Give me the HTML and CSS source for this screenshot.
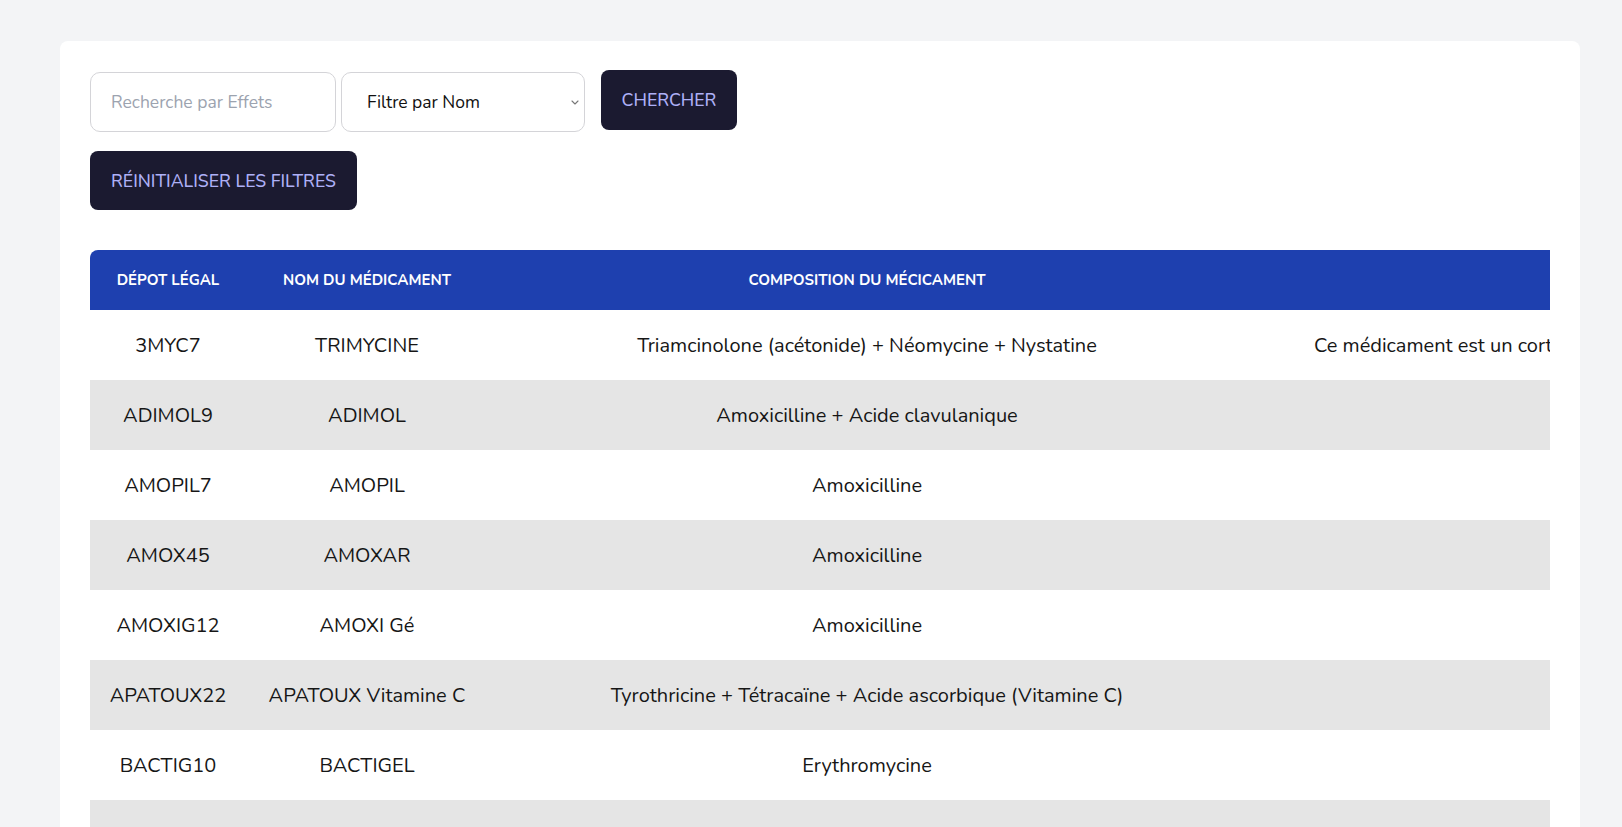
FILE: index.html
```html
<!DOCTYPE html>
<html lang="fr">
<head>
<meta charset="utf-8">
<title>Médicaments</title>
<link rel="stylesheet" href="styles.css">
</head>
<body>
<main class="page">
  <section class="card">
    <div class="filters">
      <input class="field" type="text" placeholder="Recherche par Effets">
      <span class="select-wrap">
        <select class="field select">
          <option>Filtre par Nom</option>
          <option>Filtre par Dépot légal</option>
        </select>
        <svg class="chevron" width="8" height="5" viewBox="0 0 8 5" aria-hidden="true"><path d="M1 1l3 3 3-3" fill="none" stroke="#777" stroke-width="1.1" stroke-linecap="round" stroke-linejoin="round"/></svg>
      </span>
      <button class="btn btn-search">CHERCHER</button>
    </div>
    <div class="actions">
      <button class="btn btn-reset">RÉINITIALISER LES FILTRES</button>
    </div>
    <div class="table-wrap">
      <table class="meds">
        <colgroup>
          <col class="c1"><col class="c2"><col class="c3"><col class="c4">
        </colgroup>
        <thead>
          <tr>
            <th>Dépot légal</th>
            <th>Nom du médicament</th>
            <th>Composition du mécicament</th>
            <th>Effets</th>
          </tr>
        </thead>
        <tbody>
          <tr><td>3MYC7</td><td>TRIMYCINE</td><td>Triamcinolone (acétonide) + Néomycine + Nystatine</td><td class="desc">Ce médicament est un corticoïde à activité anti-inflammatoire associé à deux antibiotiques et un antifongique.</td></tr>
          <tr><td>ADIMOL9</td><td>ADIMOL</td><td>Amoxicilline + Acide clavulanique</td><td class="desc">Antibiotique de la famille des bêta-lactamines.</td></tr>
          <tr><td>AMOPIL7</td><td>AMOPIL</td><td>Amoxicilline</td><td class="desc">Antibiotique de la famille des pénicillines.</td></tr>
          <tr><td>AMOX45</td><td>AMOXAR</td><td>Amoxicilline</td><td class="desc">Antibiotique de la famille des pénicillines.</td></tr>
          <tr><td>AMOXIG12</td><td>AMOXI Gé</td><td>Amoxicilline</td><td class="desc">Antibiotique de la famille des pénicillines.</td></tr>
          <tr><td>APATOUX22</td><td>APATOUX Vitamine C</td><td>Tyrothricine + Tétracaïne + Acide ascorbique (Vitamine C)</td><td class="desc">Antiseptique local et anesthésique.</td></tr>
          <tr><td>BACTIG10</td><td>BACTIGEL</td><td>Erythromycine</td><td class="desc">Antibiotique de la famille des macrolides.</td></tr>
          <tr><td>BACTIV13</td><td>BACTIVIL</td><td>Erythromycine</td><td class="desc">Antibiotique de la famille des macrolides.</td></tr>
          <tr><td>BITALV</td><td>BIVALIC</td><td>Dextropropoxyphène + Paracétamol</td><td class="desc">Antalgique.</td></tr>
        </tbody>
      </table>
    </div>
  </section>
</main>
</body>
</html>
```

FILE: styles.css
```css
* { box-sizing: border-box; }

html, body {
  margin: 0;
  background: #f3f4f6;
  font-family: "Nunito", "Lato", "Noto Sans", sans-serif;
  color: #111;
}

.page {
  padding: 41px 42px 0 60px;
}

.card {
  background: #ffffff;
  border-radius: 8px;
  padding: 29px 30px 30px 30px;
}

.filters {
  display: flex;
  align-items: flex-start;
}

.field {
  height: 60px;
  margin-top: 2px;
  border: 1px solid #d4d4d8;
  border-radius: 10px;
  background: #fff;
  font-family: inherit;
  font-size: 17.5px;
  color: #111;
  padding: 0 20px;
  outline: none;
}

.field::placeholder { color: #9ca3af; }

input.field { width: 246px; }

.select-wrap {
  position: relative;
  display: block;
  margin-left: 5px;
}

.select {
  display: block;
  width: 244px;
  padding-left: 25px;
  padding-right: 30px;
  appearance: none;
  -webkit-appearance: none;
}

.chevron {
  position: absolute;
  right: 6px;
  top: 30px;
  pointer-events: none;
}

.btn {
  background: #1b1a30;
  color: #aeb0f7;
  border: none;
  border-radius: 8px;
  font-family: inherit;
  font-size: 17.6px;
  font-weight: 500;
  cursor: pointer;
}

.btn-search {
  width: 136px;
  height: 60px;
  margin-left: 16px;
}

.actions {
  margin-top: 19px;
}

.btn-reset {
  width: 267px;
  height: 59px;
}

.table-wrap {
  margin-top: 40px;
  overflow: hidden;
  border-top-left-radius: 8px;
}

.meds {
  border-collapse: collapse;
  width: max-content;
}

.c1 { width: 156px; }
.c2 { width: 242px; }
.c3 { width: 758px; }

.meds thead tr {
  background: #1e40af;
}

.meds th {
  height: 60px;
  color: #fff;
  font-size: 15px;
  font-weight: 700;
  text-transform: uppercase;
  text-align: center;
  padding: 0 10px;
  white-space: nowrap;
}

.meds td {
  height: 70px;
  font-size: 20px;
  text-align: center;
  padding: 0 10px;
  white-space: nowrap;
  color: #161616;
}

.meds td.desc {
  padding: 0 68px;
}

.meds tbody tr:nth-child(even) {
  background: #e5e5e5;
}
```
